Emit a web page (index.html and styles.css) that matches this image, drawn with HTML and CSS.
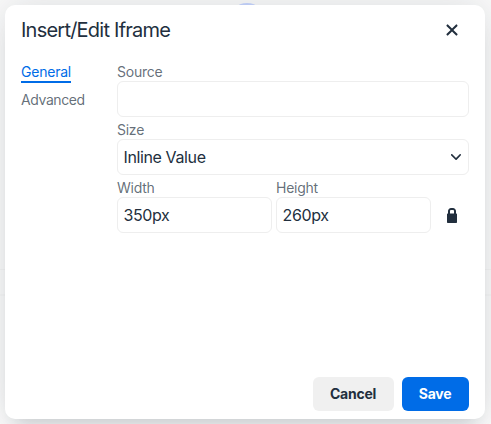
FILE: index.html
```html
<!DOCTYPE html>
<html lang="en">
<head>
<meta charset="utf-8">
<title>Insert/Edit Iframe</title>
<link rel="stylesheet" href="styles.css">
</head>
<body>
<div class="backdrop-circle"></div>
<div class="backdrop-band"></div>
<main class="dialog" role="dialog" aria-labelledby="title">
  <header class="header">
    <h1 id="title" class="title">Insert/Edit Iframe</h1>
    <button class="icon-button" aria-label="Close">
      <svg width="24" height="24" viewBox="0 0 24 24"><path fill-rule="evenodd" d="M17.3 8.2 13.4 12l3.9 3.8a.8.8 0 0 1 0 1.2l-.3.3a.8.8 0 0 1-1.2 0L12 13.4l-3.8 3.9a.8.8 0 0 1-1.2 0l-.3-.3a.8.8 0 0 1 0-1.2l3.9-3.8-3.9-3.8a.8.8 0 0 1 0-1.2l.3-.3a.8.8 0 0 1 1.2 0l3.8 3.9 3.8-3.9a.8.8 0 0 1 1.2 0l.3.3c.3.4.3.9 0 1.2Z"/></svg>
    </button>
  </header>
  <div class="content">
    <nav class="nav">
      <a class="tab tab-active">General</a>
      <a class="tab">Advanced</a>
    </nav>
    <form class="form">
      <div class="field"><label>Source</label><div class="input"></div></div>
      <div class="field"><label>Size</label><div class="input select"><span>Inline Value</span>
        <svg width="10" height="10" viewBox="0 0 10 10"><path d="M8.7 2.2c.3-.3.8-.3 1 0 .4.4.4.9 0 1.2L5.7 7.8c-.3.3-.9.3-1.2 0L.2 3.4a.8.8 0 0 1 0-1.2c.3-.3.8-.3 1.1 0L5 6l3.7-3.8Z"/></svg></div></div>
      <div class="row">
        <div class="field"><label>Width</label><div class="input">350px</div></div>
        <div class="field"><label>Height</label><div class="input">260px</div></div>
        <button type="button" class="lock" aria-label="Constrain proportions">
          <svg width="24" height="24" viewBox="0 0 24 24"><path fill-rule="evenodd" d="M16.3 10.5c.4 0 .7.3.7.7v8c0 .4-.3.7-.7.7H7.7a.7.7 0 0 1-.7-.7v-8c0-.4.3-.7.7-.7H8V8c0-.8.3-1.5.9-2.1.6-.6 1.3-.9 2.1-.9h2c.8 0 1.5.3 2.1.9.6.6.9 1.3.9 2.1v2.5h.3ZM10 8v2.5h4V8a1 1 0 0 0-.3-.7A1 1 0 0 0 13 7h-2a1 1 0 0 0-.7.3 1 1 0 0 0-.3.7Z"/></svg>
        </button>
      </div>
    </form>
  </div>
  <footer class="footer">
    <button class="button">Cancel</button>
    <button class="button primary">Save</button>
  </footer>
</main>
</body>
</html>
```
FILE: styles.css
```css
* { box-sizing: border-box; }
body {
  margin: 0;
  height: 424px;
  padding: 5px 6px 5px 5px;
  overflow: hidden;
  background: #fbfbfb;
  color: #222f3e;
  font: 16px/24px Inter, sans-serif;
}
svg { display: block; fill: #222f3e; }
button { border: 0; padding: 0; background: none; font: inherit; color: inherit; }
.backdrop-circle {
  position: absolute;
  top: 3px;
  left: 229px;
  width: 36px;
  height: 36px;
  border-radius: 50%;
  background: #c8d6ff;
}
.backdrop-band {
  position: absolute;
  top: 269px;
  left: 0;
  right: 0;
  height: 27px;
  border-top: 1px solid #f5f5f5;
  border-bottom: 2px solid #f7f7f7;
}
.dialog {
  position: relative;
  display: flex;
  flex-direction: column;
  height: 414px;
  border-radius: 10px;
  background: #fff;
  box-shadow: 0 16px 16px -10px rgba(34, 47, 62, .15), 0 0 40px 1px rgba(34, 47, 62, .15);
}
.header { display: flex; justify-content: space-between; align-items: center; padding: 8px 16px 0; height: 42px; }
.title { margin: 0; font-size: 20px; line-height: 26px; font-weight: 400; letter-spacing: -.77px; }
.icon-button { display: grid; place-items: center; width: 34px; height: 34px; }
.content { display: flex; flex: 1; padding: 16px; font-size: 16px; }
.nav { display: flex; flex-direction: column; align-items: flex-start; width: 96px; }
.tab { margin-bottom: 8px; border-bottom: 2px solid transparent; color: rgba(34, 47, 62, .7); font-size: 14px; line-height: 18px; letter-spacing: -.4px; }
.tab-active { border-color: #006ce7; color: #006ce7; letter-spacing: -.22px; }
.form { flex: 1; }
.field { margin-bottom: 4px; }
label { display: block; color: rgba(34, 47, 62, .7); font-size: 14px; line-height: 18px; letter-spacing: -.25px; }
.input { height: 36px; padding: 5px 7px 5px 5.5px; border: 1px solid #eee; border-radius: 6px; letter-spacing: -.38px; }
.select { display: flex; align-items: center; justify-content: space-between; }
.row { display: flex; gap: 4px; }
.row .field { width: 155px; }
.lock { display: grid; place-items: center; width: 34px; height: 36px; margin-top: 18px; }
.footer { display: flex; justify-content: flex-end; gap: 8px; padding: 8px 16px; }
.button { width: 81px; height: 34px; padding-right: 1px; border-radius: 6px; background: #f0f0f0; font-size: 14px; font-weight: 700; letter-spacing: -.25px; }
.primary { width: 67px; background: #006ce7; color: #fff; }
```
